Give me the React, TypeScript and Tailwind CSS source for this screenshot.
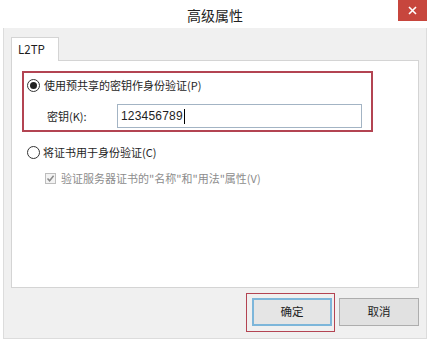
import React from "react";

const font = { fontFamily: '"Noto Sans CJK SC", "Noto Sans", sans-serif' };

function Radio({ checked }: { checked?: boolean }) {
  return (
    <span className="w-[13px] h-[13px] rounded-full border border-[#333] bg-white flex items-center justify-center shrink-0">
      {checked && <span className="w-[7px] h-[7px] rounded-full bg-[#222]" />}
    </span>
  );
}

export default function App() {
  return (
    <div className="w-[430px] h-[342px] bg-white flex flex-col text-[#1e1e1e] overflow-hidden" style={font}>
      {/* title bar */}
      <div className="h-[28px] grid grid-cols-[1fr_auto_1fr] shrink-0">
        <div />
        <div className="text-[14px] leading-[28px] pt-[1px] text-[#222]">高级属性</div>
        <div className="flex justify-end pr-[3px]">
          <button className="w-[29px] h-[21px] bg-[#c7463d] flex items-center justify-center">
            <svg width="9" height="9" viewBox="0 0 9 9">
              <path d="M1 1 L8 8 M8 1 L1 8" stroke="#fff" strokeWidth="1.6" />
            </svg>
          </button>
        </div>
      </div>

      {/* body */}
      <div className="flex-1 mx-[3px] mb-[3px] border-x border-b border-[#dcdcdc] bg-[#f0f0f0] pl-[7px] pr-[7px] pt-[9px] flex flex-col">
        {/* tab strip */}
        <div className="flex">
          <div className="w-[48px] h-[24px] -mb-px relative z-10 bg-white border border-b-0 border-[#d4d4d4] pl-[6px] text-[11.5px] leading-[22px]">
            L2TP
          </div>
        </div>

        {/* tab panel */}
        <div className="h-[228px] bg-white border border-[#d4d4d4] pt-[10px] pl-[10px] flex flex-col text-[11px]">
          <div className="w-[351px] border-2 border-[#b34452] pt-[2px] pb-[2px]">
            <div className="h-[20px] flex items-center pl-[3px] gap-[4px]">
              <Radio checked />
              <span>使用预共享的密钥作身份验证(P)</span>
            </div>
            <div className="mt-[9px] flex items-center pl-[23px]">
              <span className="w-[70px]">密钥(K):</span>
              <div className="w-[245px] h-[24px] border border-[#a3b4c4] bg-white flex items-center pl-[3px]">
                <span className="text-[12px] tracking-[0.2px]" style={{ fontFamily: '"Liberation Sans", Arial, sans-serif' }}>
                  123456789
                </span>
                <span className="w-px h-[15px] bg-black ml-[1px]" />
              </div>
            </div>
          </div>

          <div className="mt-[10px] h-[20px] flex items-center pl-[5px] gap-[3px]">
            <Radio />
            <span>将证书用于身份验证(C)</span>
          </div>

          <div className="mt-[6px] h-[20px] flex items-center pl-[23px] gap-[5px] text-[#8c8c8c]">
            <span className="w-[11px] h-[11px] border border-[#bdbdbd] bg-[#f3f3f3] flex items-center justify-center shrink-0">
              <svg width="9" height="9" viewBox="0 0 9 9">
                <path d="M1.5 4.5 L3.6 6.8 L7.6 1.8" stroke="#8a8a8a" strokeWidth="1.5" fill="none" />
              </svg>
            </span>
            <span>验证服务器证书的"名称"和"用法"属性(V)</span>
          </div>
        </div>

        {/* buttons */}
        <div className="mt-[5px] flex justify-end items-start gap-[4px] text-[11.5px]">
          <div className="border border-[#b34452] pl-[5px] pr-[2px] pt-[4px] pb-[5px]">
            <button className="w-[80px] h-[28px] bg-[#e5e5e5] border-2 border-[#7db6da] flex items-center justify-center">
              确定
            </button>
          </div>
          <button className="mt-[5px] w-[80px] h-[28px] bg-[#e1e1e1] border border-[#adadad] flex items-center justify-center">
            取消
          </button>
        </div>
      </div>
    </div>
  );
}
